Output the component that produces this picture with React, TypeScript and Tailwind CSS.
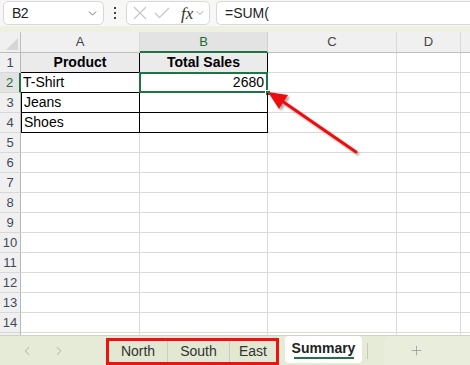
import { ChevronDown, ChevronLeft, ChevronRight, Plus } from 'lucide-react';

const COLS = [
  { key: 'A', w: 'w-[119px]' },
  { key: 'B', w: 'w-[128px]' },
  { key: 'C', w: 'w-[129px]' },
  { key: 'D', w: 'w-[64px]' },
];

const data: Record<number, [string, string]> = {
  1: ['Product', 'Total Sales'],
  2: ['T-Shirt', '2680'],
  3: ['Jeans', ''],
  4: ['Shoes', ''],
};

function TopBar() {
  return (
    <div className="h-[26px] bg-[#f7f7f5] flex items-start pt-px">
      <div className="ml-[3px] w-[101px] h-[24px] bg-white border border-[#d8d8d8] rounded-[5px] flex items-center pl-[8px] pr-[4px]">
        <span className="text-[14px] text-[#222] tracking-[-0.5px]">B2</span>
        <ChevronDown className="ml-auto text-[#555]" size={13} strokeWidth={1.5} />
      </div>
      <div className="w-[22px] h-[24px] flex flex-col items-center justify-center gap-[3px]">
        <div className="w-[2px] h-[2px] bg-[#444]" />
        <div className="w-[2px] h-[2px] bg-[#444]" />
        <div className="w-[2px] h-[2px] bg-[#444]" />
      </div>
      <div className="w-[84px] h-[24px] bg-white border border-[#d8d8d8] rounded-[5px] flex items-center pl-[6px]">
        <svg width="14" height="14" viewBox="0 0 14 14" className="shrink-0">
          <path d="M1 1 L13 13 M13 1 L1 13" stroke="#c4c4c4" strokeWidth="1.1" fill="none" />
        </svg>
        <svg width="16" height="12" viewBox="0 0 16 12" className="ml-[7px] shrink-0">
          <path d="M1 6 L5.5 10.5 L15 1" stroke="#c4c4c4" strokeWidth="1.1" fill="none" />
        </svg>
        <span className="ml-[11px] italic text-[17px] text-[#333] leading-none" style={{ fontFamily: '"Liberation Serif", serif' }}>fx</span>
        <ChevronDown className="ml-[1px] shrink-0 text-[#888]" size={12} strokeWidth={1.5} />
      </div>
      <div className="ml-[6px] flex-1 h-[24px] bg-white border border-r-0 border-[#d8d8d8] rounded-l-[5px] flex items-center pl-[8px]">
        <span className="text-[14px] text-[#222]">=SUM(</span>
      </div>
    </div>
  );
}

function HeaderRow() {
  return (
    <div className="flex h-[21px] shrink-0">
      <div className="w-[21px] h-full bg-[#f0f0f0] border-r border-b border-[#bdbdbd] relative">
        <div className="absolute right-[2px] bottom-[2px] w-0 h-0 border-l-[12px] border-l-transparent border-b-[12px] border-b-[#d6d6d6]" />
      </div>
      {COLS.map((c) =>
        c.key === 'B' ? (
          <div key={c.key} className={`${c.w} h-full bg-[#e3e3e3] border-r border-[#d0d0d0] border-b-2 border-b-[#217346] flex items-center justify-center text-[13px] text-[#1d6b3c]`}>
            {c.key}
          </div>
        ) : (
          <div key={c.key} className={`${c.w} h-full bg-[#f0f0f0] border-r border-[#d8d8d8] border-b border-b-[#bdbdbd] flex items-center justify-center text-[13px] text-[#444]`}>
            {c.key}
          </div>
        )
      )}
      <div className="flex-1 h-full bg-[#f0f0f0] border-b border-[#bdbdbd]" />
    </div>
  );
}

function Row({ n }: { n: number }) {
  const row = data[n];
  const active = n === 2;
  return (
    <div className="flex h-[20px] shrink-0">
      <div
        className={
          active
            ? 'w-[21px] h-full bg-[#e3e3e3] border-r-2 border-r-[#217346] border-b border-b-[#d8d8d8] flex items-center justify-center text-[13px] text-[#1d6b3c]'
            : 'w-[21px] h-full bg-[#f0f0f0] border-r border-r-[#b8b8b8] border-b border-b-[#d8d8d8] flex items-center justify-center text-[13px] text-[#3e4a5a]'
        }
      >
        {n}
      </div>
      {row ? (
        <>
          <div
            className={`w-[119px] h-full border-r border-b border-black flex items-center px-[2px] text-[14px] text-black ${
              n === 1 ? 'bg-[#ebebeb] justify-center font-bold' : ''
            } ${n > 2 ? 'border-l' : ''}`}
          >
            {row[0]}
          </div>
          <div
            className={`w-[128px] h-full border-r border-b border-black flex items-center px-[3px] text-[14px] text-black relative ${
              n === 1 ? 'bg-[#ebebeb] justify-center font-bold' : 'justify-end'
            }`}
          >
            {row[1]}
            {active && (
              <>
                <div className="absolute -left-px -top-px -right-px -bottom-px border-2 border-[#217346]" />
                <div className="absolute -right-[4px] -bottom-[4px] w-[6px] h-[6px] bg-[#217346] border border-white" />
              </>
            )}
          </div>
        </>
      ) : (
        <>
          <div className="w-[119px] h-full border-r border-b border-[#dadada]" />
          <div className="w-[128px] h-full border-r border-b border-[#dadada]" />
        </>
      )}
      <div className="w-[129px] h-full border-r border-b border-[#dadada]" />
      <div className="w-[64px] h-full border-r border-b border-[#dadada]" />
      <div className="flex-1 h-full border-b border-[#dadada]" />
    </div>
  );
}

function TabBar() {
  return (
    <div className="h-[30px] shrink-0 bg-[#e6ebd8] border-t border-[#cfd3c4] flex items-center">
      <ChevronLeft className="ml-[20px] text-[#a0a0a0]" size={14} strokeWidth={1.5} />
      <ChevronRight className="ml-[18px] text-[#a0a0a0]" size={14} strokeWidth={1.5} />
      <div className="ml-[40px] w-[173px] h-[27px] mt-[1px] border-[3px] border-[#ee1111] flex bg-[#e2e8d2]">
        <div className="w-[59px] h-full flex items-center justify-center text-[14px] text-[#333] border-r border-[#c9cfbd]">North</div>
        <div className="w-[62px] h-full flex items-center justify-center text-[14px] text-[#333] border-r border-[#c9cfbd]">South</div>
        <div className="flex-1 h-full flex items-center justify-center text-[14px] text-[#333]">East</div>
      </div>
      <div className="ml-[6px] w-[77px] h-[27px] -mt-[2px] bg-white rounded-[4px] flex flex-col items-center justify-center">
        <span className="text-[14px] font-bold text-[#222] leading-[16px]">Summary</span>
        <div className="w-[60px] h-[2px] bg-[#217346] mt-[1px]" />
      </div>
      <div className="ml-[5px] w-px h-[16px] bg-[#c6c9bd]" />
      <div className="ml-[16px] flex-1 h-full bg-[#e9eedc] rounded-tl-[6px] flex items-center pl-[25px]">
        <Plus className="text-[#9a9a9a]" size={15} strokeWidth={1.3} />
      </div>
    </div>
  );
}

function Arrow() {
  return (
    <svg className="absolute left-0 top-0 pointer-events-none" width={470} height={365}>
      <defs>
        <filter id="sh" x="-20%" y="-20%" width="140%" height="140%">
          <feDropShadow dx="2" dy="2" stdDeviation="1.3" floodColor="#000" floodOpacity="0.35" />
        </filter>
      </defs>
      <g filter="url(#sh)">
        <line x1={356} y1={152} x2={282} y2={101} stroke="#ee1111" strokeWidth={3} strokeLinecap="round" />
        <polygon points="268,92 288,95 279,109" fill="#ee1111" />
      </g>
    </svg>
  );
}

export default function App() {
  const rows = Array.from({ length: 15 }, (_, i) => i + 1);
  return (
    <div
      className="w-[470px] h-[365px] overflow-hidden relative bg-white flex flex-col"
      style={{ fontFamily: '"Liberation Sans", Arial, sans-serif' }}
    >
      <TopBar />
      <div className="h-[6px] bg-[#eef1e2]" />
      <div className="flex-1 flex flex-col overflow-hidden">
        <HeaderRow />
        {rows.map((n) => (
          <Row key={n} n={n} />
        ))}
      </div>
      <TabBar />
      <Arrow />
    </div>
  );
}
